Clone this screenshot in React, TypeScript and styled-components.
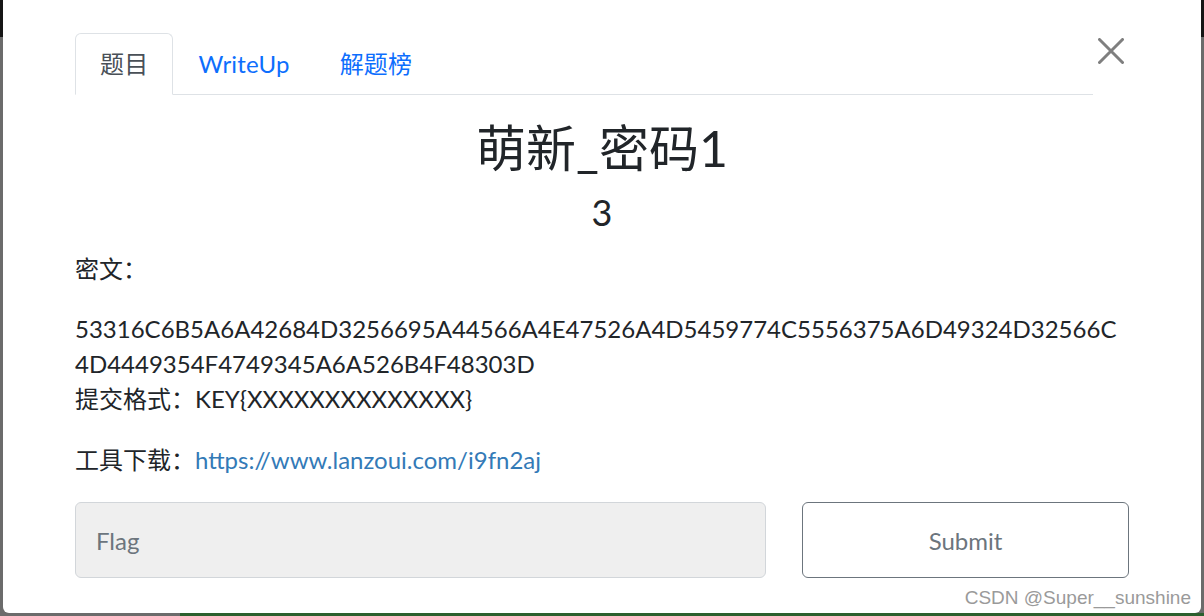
import React from 'react';
import styled, { createGlobalStyle } from 'styled-components';

const GlobalStyle = createGlobalStyle`
  html, body {
    margin: 0;
    padding: 0;
    height: 616px;
    overflow: hidden;
  }
  body {
    font-family: Lato, "Noto Sans CJK SC", sans-serif;
    color: #212529;
  }
`;

const FONT = `Lato, "Noto Sans CJK SC", sans-serif`;

const Backdrop = styled.div`
  height: 616px;
  box-sizing: border-box;
  padding: 0 3px 3px 3px;
  background:
    linear-gradient(to right, #6b6b6b 0, #6b6b6b 180px, #2c5f2e 180px) bottom / 100% 3px no-repeat,
    linear-gradient(to bottom, #161616 0, #161616 37px, #6b6b6b 37px);
`;

const Modal = styled.div`
  position: relative;
  height: 100%;
  box-sizing: border-box;
  background: #fff;
  border-radius: 0 0 6px 6px;
  padding: 33px 72px 35px 72px;
  display: flex;
  flex-direction: column;
`;

const Header = styled.div`
  display: flex;
  align-items: flex-start;
`;

const Tabs = styled.nav`
  flex: 1;
  display: flex;
  border-bottom: 1px solid #dee2e6;
`;

const Tab = styled.a<{ $active?: boolean }>`
  display: block;
  padding: 12px 24px;
  margin-bottom: -1px;
  font-family: ${FONT};
  font-size: 24px;
  line-height: 36px;
  text-decoration: none;
  cursor: pointer;
  border: 1px solid ${({ $active }) => ($active ? '#dee2e6' : 'transparent')};
  border-bottom-color: ${({ $active }) => ($active ? '#fff' : 'transparent')};
  border-radius: 6px 6px 0 0;
  background: ${({ $active }) => ($active ? '#fff' : 'transparent')};
  color: ${({ $active }) => ($active ? '#495057' : '#0d6efd')};
  letter-spacing: 0.2px;
`;

const CloseButton = styled.button`
  width: 36px;
  height: 36px;
  padding: 0;
  border: none;
  background: none;
  cursor: pointer;
  display: flex;
  align-items: center;
  justify-content: center;
`;

const Title = styled.h3`
  margin: 24px 0 0 0;
  text-align: center;
  font-family: ${FONT};
  font-weight: 400;
  font-size: 50px;
  line-height: 58px;
  color: #212529;
`;

const Value = styled.h4`
  margin: 14px 0 0 0;
  text-align: center;
  font-family: ${FONT};
  font-weight: 400;
  font-size: 36px;
  line-height: 43px;
  color: #212529;
`;

const Description = styled.div`
  margin-top: 17px;
  font-family: ${FONT};
  font-size: 24px;
  line-height: 35px;
`;

const Para = styled.p<{ $gap: number }>`
  margin: 0 0 ${({ $gap }) => $gap}px 0;
  word-break: break-all;
`;

const Link = styled.a`
  color: #337ab7;
  text-decoration: none;
`;

const FormRow = styled.form`
  margin-top: 25px;
  display: grid;
  grid-template-columns: 691px 327px;
  column-gap: 36px;
`;

const FlagInput = styled.input`
  height: 76px;
  box-sizing: border-box;
  padding: 0 20px;
  border: 1px solid #d2d6da;
  border-radius: 6px;
  background: #efefef;
  font-family: ${FONT};
  font-size: 24px;
  color: #495057;
  outline: none;

  &::placeholder {
    color: #6c757d;
  }
`;

const SubmitButton = styled.button`
  height: 76px;
  box-sizing: border-box;
  border: 1px solid #6c757d;
  border-radius: 6px;
  background: #fff;
  color: #6c757d;
  font-family: ${FONT};
  font-size: 24px;
  cursor: pointer;
`;

const Watermark = styled.div`
  position: absolute;
  right: 10px;
  bottom: 4px;
  font-family: "Liberation Sans", Arial, sans-serif;
  font-size: 19px;
  color: #9a9a9a;
  text-shadow: 0 0 1px #fff;
  pointer-events: none;
`;

const CloseIcon = () => (
  <svg width="26" height="26" viewBox="0 0 26 26">
    <path d="M1.5 1.5 L24.5 24.5 M24.5 1.5 L1.5 24.5" stroke="#7f7f7f" strokeWidth="3" strokeLinecap="round" fill="none" />
  </svg>
);

export default function App() {
  const [tab, setTab] = React.useState('challenge');

  return (
    <Backdrop>
      <GlobalStyle />
      <Modal>
        <Header>
          <Tabs>
            <Tab $active={tab === 'challenge'} onClick={() => setTab('challenge')}>题目</Tab>
            <Tab $active={tab === 'writeup'} onClick={() => setTab('writeup')}>WriteUp</Tab>
            <Tab $active={tab === 'solves'} onClick={() => setTab('solves')}>解题榜</Tab>
          </Tabs>
          <CloseButton aria-label="Close">
            <CloseIcon />
          </CloseButton>
        </Header>

        <Title>萌新_密码1</Title>
        <Value>3</Value>

        <Description>
          <Para $gap={25}>密文：</Para>
          <Para $gap={26}>
            53316C6B5A6A42684D3256695A44566A4E47526A4D5459774C5556375A6D49324D32566C
            <br />
            4D4449354F4749345A6A526B4F48303D
            <br />
            提交格式：KEY{'{'}XXXXXXXXXXXXXX{'}'}
          </Para>
          <Para $gap={0}>
            工具下载：<Link href="#">https://www.lanzoui.com/i9fn2aj</Link>
          </Para>
        </Description>

        <FormRow onSubmit={(e) => e.preventDefault()}>
          <FlagInput type="text" placeholder="Flag" />
          <SubmitButton type="submit">Submit</SubmitButton>
        </FormRow>

        <Watermark>CSDN @Super__sunshine</Watermark>
      </Modal>
    </Backdrop>
  );
}
